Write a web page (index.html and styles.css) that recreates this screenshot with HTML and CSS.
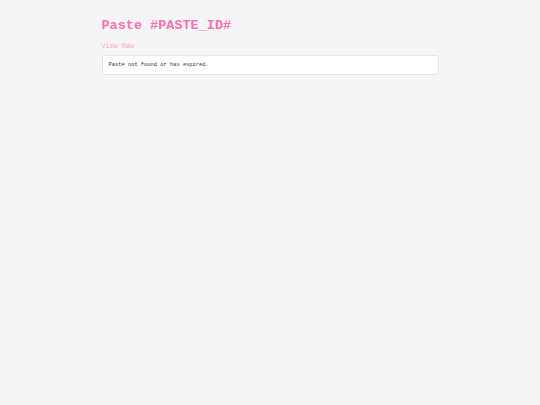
FILE: index.html
```html
<!DOCTYPE html>
<html lang="en">
<head>
<meta charset="UTF-8">
<meta name="viewport" content="width=device-width, initial-scale=1.0">
<title>Paste #PASTE_ID#</title>
<link rel="stylesheet" href="styles.css">
</head>
<body>
    <div class="container">
        <h1 class="title">Paste #PASTE_ID#</h1>
        <div class="links">
            <a class="raw-link" href="#">View Raw</a>
        </div>
        <div class="paste-box">
            <pre class="paste-content">Paste not found or has expired.</pre>
        </div>
    </div>
</body>
</html>
```

FILE: styles.css
```css
body {
    margin: 0;
    background: #f5f5f5;
    font-family: "Liberation Mono", "DejaVu Sans Mono", monospace;
}
.container {
    max-width: 337px;
    margin: 0 auto;
    padding: 17px 0;
}
.title {
    margin: 0;
    font-size: 13.5px;
    line-height: 18px;
    font-weight: bold;
    color: #f472b6;
}
.links {
    margin-top: 7px;
    font-size: 6.75px;
    line-height: 9px;
}
.raw-link {
    color: #f9a8d4;
    text-decoration: none;
}
.paste-box {
    margin-top: 4px;
    background: #fff;
    border: 1px solid #e5e5e5;
    border-radius: 2px;
    padding: 5px 6px;
}
.paste-content {
    margin: 0;
    font-family: inherit;
    font-size: 5.4px;
    line-height: 8px;
    color: #333;
}
```
